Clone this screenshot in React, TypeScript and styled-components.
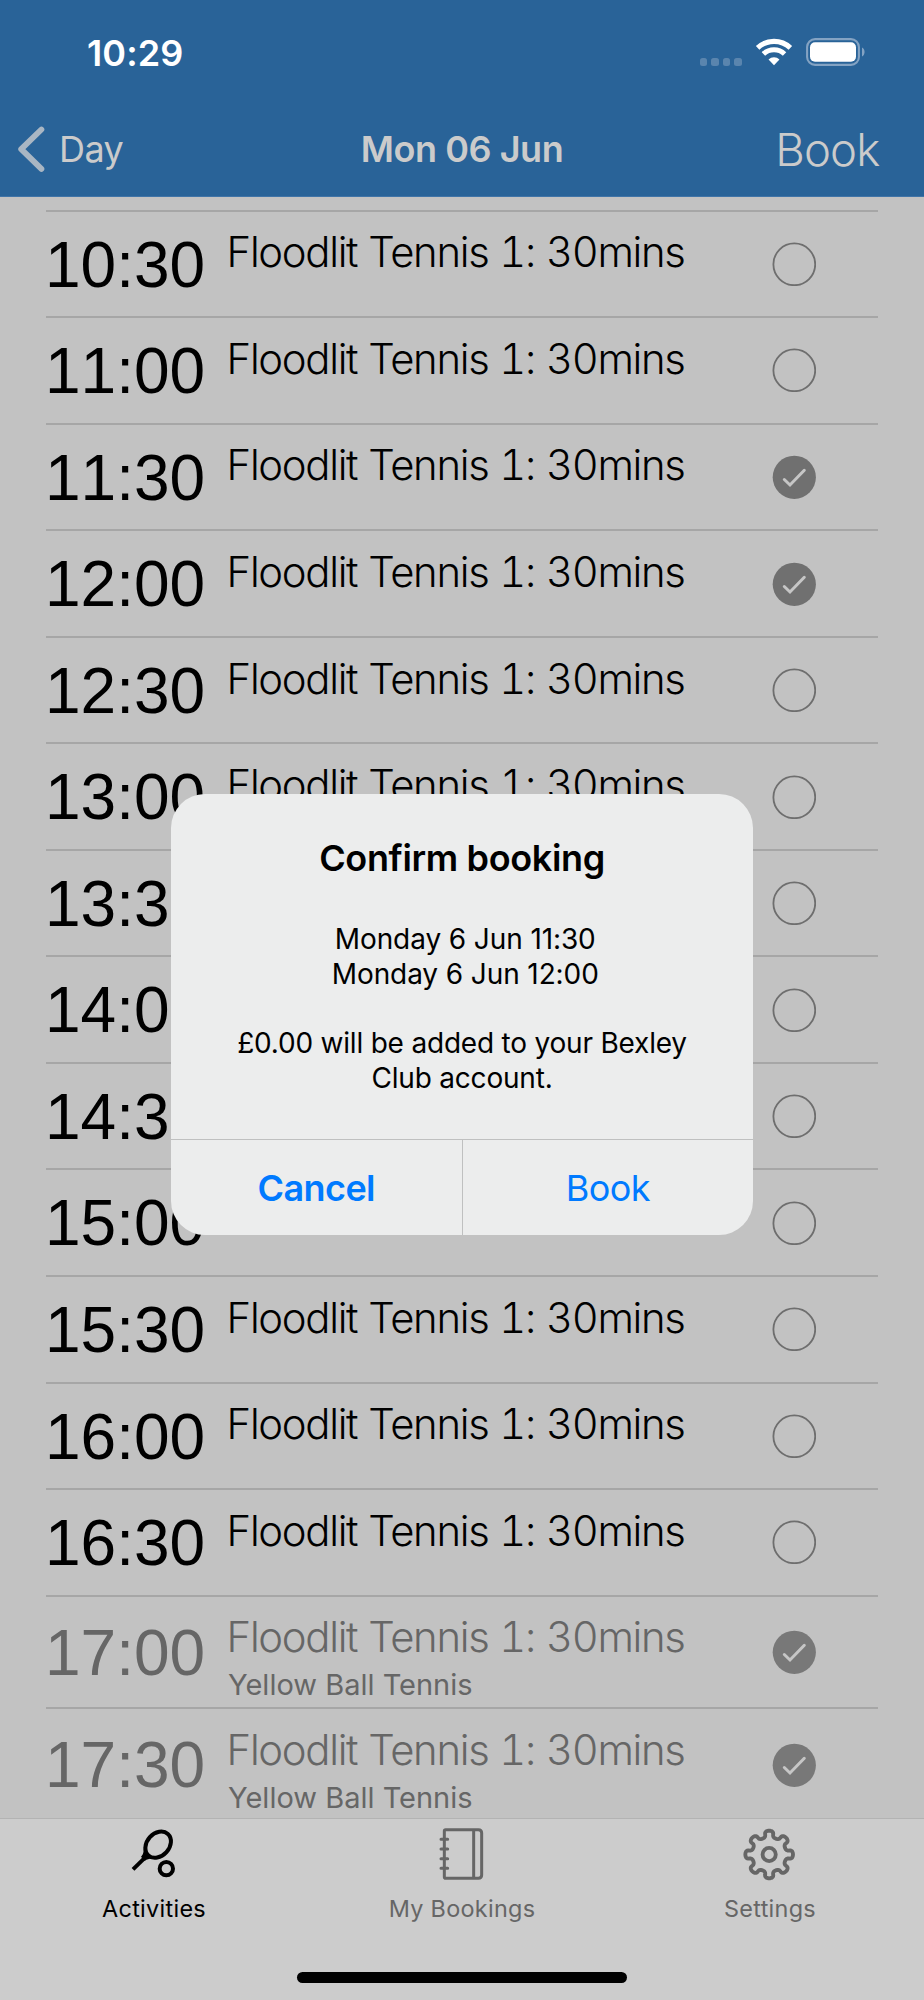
import React from 'react';
import styled, { createGlobalStyle } from 'styled-components';

const GlobalStyle = createGlobalStyle`
  *, *::before, *::after { box-sizing: border-box; }
  body { margin: 0; background: #c2c2c2; }
`;

const Screen = styled.div`
  position: relative;
  display: flex;
  flex-direction: column;
  width: 924px;
  height: 2000px;
  overflow: hidden;
  background: #c2c2c2;
  color: #000;
  font-family: Inter, 'Liberation Sans', sans-serif;
`;

const Header = styled.header`
  flex: none;
  height: 197px;
  background: #296398;
  border-bottom: 1px solid #3f74a8;
`;

const StatusBar = styled.div`
  display: flex;
  justify-content: space-between;
  align-items: center;
  height: 106px;
  padding: 0 59px 0 87px;
`;

const Clock = styled.span`
  color: #fff;
  font-size: 36px;
  font-weight: 600;
  letter-spacing: 0.1px;
  line-height: 106px;
`;

const StatusIcons = styled.div`
  display: flex;
  align-items: center;
  padding-bottom: 2px;
`;

const SignalDots = styled.div`
  display: flex;
  gap: 4px;
  margin: 20px 13px 0 0;
`;

const Dot = styled.i`
  width: 7.6px;
  height: 7.6px;
  border-radius: 2.5px;
  background: #5a85ae;
`;

const Wifi = styled.svg`
  width: 38px;
  height: 28px;
  margin-right: 13px;
`;

const Battery = styled.svg`
  width: 59px;
  height: 28px;
`;

const NavBar = styled.nav`
  display: grid;
  grid-template-columns: 1fr auto 1fr;
  align-items: center;
  height: 86px;
  padding: 0 17px;
  color: #cbcbcb;
`;

const BackButton = styled.div`
  display: flex;
  align-items: center;
  gap: 14px;
  font-size: 36px;
  letter-spacing: -0.6px;
  line-height: 44px;
`;

const Chevron = styled.svg`
  width: 28px;
  height: 46px;
`;

const NavTitle = styled.h1`
  margin: 0;
  font-size: 36px;
  font-weight: 600;
  letter-spacing: -0.44px;
  line-height: 44px;
`;

const NavAction = styled.div`
  justify-self: end;
  margin-right: 27.5px;
  padding-top: 1px;
  font-size: 45.5px;
  font-weight: 350;
  letter-spacing: -0.8px;
  line-height: 56px;
`;

const SlotList = styled.main`
  flex: 1;
  display: flex;
  flex-direction: column;
  min-height: 0;
  overflow: hidden;
  padding: 0 46px;
`;

const Slot = styled.section<{ $tall?: boolean; $muted?: boolean; $scrolled?: boolean }>`
  flex: none;
  display: flex;
  height: ${p => (p.$tall ? 112.7 : 106.54)}px;
  margin-top: ${p => (p.$scrolled ? -98 : 0)}px;
  border-bottom: 2px solid #a6a6a6;
  color: ${p => (p.$muted ? '#666' : '#000')};
`;

const SlotTime = styled.div`
  align-self: center;
  width: 184px;
  margin-left: -1px;
  padding-top: 1.5px;
  font: 400 64px/72px 'Liberation Sans', Arial, sans-serif;
  font-kerning: none;
`;

const SlotBody = styled.div`
  flex: 1;
  padding-top: 15.7px;
`;

const SlotTitle = styled.div`
  margin-left: -2.4px;
  font-size: 41.8px;
  font-weight: 300;
  font-variant-numeric: tabular-nums;
  letter-spacing: -1.3px;
  word-spacing: 1px;
  line-height: 50px;
  white-space: nowrap;
`;

const SlotNote = styled.div<{ $scrolled?: boolean }>`
  margin: ${p => (p.$scrolled ? 3 : 5)}px 0 0 -1px;
  font-size: 29px;
  line-height: 36px;
`;

const SlotMark = styled.svg`
  flex: none;
  align-self: center;
  width: 44px;
  height: 44px;
  margin-right: 62px;
`;

const TabBar = styled.footer`
  flex: none;
  display: flex;
  flex-direction: column;
  align-items: center;
  height: 182px;
  background: #ccc;
  border-top: 1px solid #b3b3b3;
`;

const Tabs = styled.div`
  display: grid;
  grid-template-columns: repeat(3, 1fr);
  width: 100%;
  height: 153px;
`;

const Tab = styled.div<{ $active?: boolean }>`
  display: flex;
  flex-direction: column;
  align-items: center;
  padding-top: 3px;
  color: ${p => (p.$active ? '#000' : '#666')};
  font-size: 23.4px;
  letter-spacing: 0.3px;
  line-height: 30px;
`;

const TabIcon = styled.svg`
  width: 70px;
  height: 60px;
  margin-bottom: 12px;
  fill: none;
  stroke: currentColor;
`;

const HomeIndicator = styled.div`
  width: 330px;
  height: 11px;
  border-radius: 6px;
  background: #000;
`;

const Dialog = styled.div`
  position: absolute;
  left: 171px;
  top: 794px;
  display: flex;
  flex-direction: column;
  width: 582px;
  height: 441px;
  border-radius: 34px;
  overflow: hidden;
  background: #eceded;
`;

const DialogContent = styled.div`
  flex: 1;
  padding-top: 41.6px;
  text-align: center;
`;

const DialogTitle = styled.h2`
  margin: 0 0 42.6px;
  font-size: 36px;
  font-weight: 600;
  letter-spacing: -0.36px;
  line-height: 44px;
`;

const DialogText = styled.p<{ $indent?: boolean }>`
  margin: 0 0 34.6px;
  padding-left: ${p => (p.$indent ? 6.5 : 0)}px;
  font-size: 28px;
  letter-spacing: ${p => (p.$indent ? -0.1 : -0.2)}px;
  line-height: 34.6px;
`;

const DialogActions = styled.div`
  display: flex;
  height: 96px;
  border-top: 1px solid #bfc0c0;
`;

const DialogButton = styled.div<{ $primary?: boolean }>`
  flex: 1;
  color: #007aff;
  font-size: 36px;
  font-weight: ${p => (p.$primary ? 600 : 400)};
  letter-spacing: -0.6px;
  line-height: 96px;
  text-align: center;

  & + & { border-left: 1px solid #bfc0c0; }
`;

type SlotData = { time: string; checked?: boolean; note?: string; scrolled?: boolean };

const slots: SlotData[] = [
  { time: '10:00', checked: true, note: 'Yellow Ball Tennis', scrolled: true },
  { time: '10:30' },
  { time: '11:00' },
  { time: '11:30', checked: true },
  { time: '12:00', checked: true },
  { time: '12:30' },
  { time: '13:00' },
  { time: '13:30' },
  { time: '14:00' },
  { time: '14:30' },
  { time: '15:00' },
  { time: '15:30' },
  { time: '16:00' },
  { time: '16:30' },
  { time: '17:00', checked: true, note: 'Yellow Ball Tennis' },
  { time: '17:30', checked: true, note: 'Yellow Ball Tennis' },
];

// Closed curve with eight rounded teeth around (cx, cy).
function gearPath(cx: number, cy: number): string {
  const steps = 240;
  const points: string[] = [];
  for (let i = 0; i < steps; i++) {
    const t = (i / steps) * Math.PI * 2;
    const angle = t + 0.055 * Math.sin(16 * t);
    const radius = 61.5 + 10 * Math.cos(8 * t);
    points.push(`${(cx + radius * Math.cos(angle)).toFixed(1)} ${(cy + radius * Math.sin(angle)).toFixed(1)}`);
  }
  return `M${points.join('L')}Z`;
}

function Mark({ checked, muted }: { checked?: boolean; muted?: boolean }) {
  return (
    <SlotMark viewBox="-22.3 -22.3 44 44" fill="none">
      {checked ? (
        <>
          <circle r="21.6" fill={muted ? '#787878' : '#707070'} />
          <path d="M-10 2.2L-4.3 7.7L10 -7" stroke="#c6c6c6" strokeWidth="3" strokeLinecap="round" />
        </>
      ) : (
        <circle r="20.9" stroke="#6e6e6e" strokeWidth="1.8" />
      )}
    </SlotMark>
  );
}

export default function App() {
  return (
    <Screen>
      <GlobalStyle />
      <Header>
        <StatusBar>
          <Clock>10:29</Clock>
          <StatusIcons>
            <SignalDots>
              <Dot /><Dot /><Dot /><Dot />
            </SignalDots>
            <Wifi viewBox="0 0 114 84" fill="none" stroke="#fff">
              <path d="M7.9 29.4A72 72 0 0 1 106.1 29.4" strokeWidth="15.5" />
              <path d="M25.3 48A46.5 46.5 0 0 1 88.7 48" strokeWidth="15" />
              <path d="M57 82L40.6 64.5A24 24 0 0 1 73.4 64.5Z" fill="#fff" stroke="none" />
            </Wifi>
            <Battery viewBox="0 0 59 28">
              <rect x="1.1" y="1.1" width="51.8" height="25.8" rx="8" fill="none" stroke="#84a3c3" strokeWidth="2.1" />
              <rect x="4" y="4.2" width="46" height="19.6" rx="5" fill="#fff" />
              <path d="M56 9.6C59.4 11 59.4 17 56 18.4Z" fill="#84a3c3" />
            </Battery>
          </StatusIcons>
        </StatusBar>
        <NavBar>
          <BackButton>
            <Chevron viewBox="0 0 28 46" fill="none">
              <path d="M24.4 3.5L4.2 23.2L24.4 42.9" stroke="#a9b6c3" strokeWidth="5.8" strokeLinecap="round" strokeLinejoin="round" />
            </Chevron>
            Day
          </BackButton>
          <NavTitle>Mon 06 Jun</NavTitle>
          <NavAction>Book</NavAction>
        </NavBar>
      </Header>

      <SlotList>
        {slots.map(slot => (
          <Slot key={slot.time} $tall={!!slot.note} $muted={!!slot.note} $scrolled={slot.scrolled}>
            <SlotTime>{slot.time}</SlotTime>
            <SlotBody>
              <SlotTitle>Floodlit Tennis 1: 30mins</SlotTitle>
              {slot.note && <SlotNote $scrolled={slot.scrolled}>{slot.note}</SlotNote>}
            </SlotBody>
            <Mark checked={slot.checked} muted={!!slot.note} />
          </Slot>
        ))}
      </SlotList>

      <TabBar>
        <Tabs>
          <Tab $active>
            <TabIcon viewBox="-3 21 210 180">
              <ellipse cx="114.5" cy="89" rx="43.5" ry="33.5" transform="rotate(-48 114.5 89)" strokeWidth="12" />
              <path d="M71 96C72 112 69 119 63 125L74 138C84 131 92 131 104 132L88 118Z" fill="currentColor" stroke="none" />
              <path d="M39 163L72 131" strokeWidth="12" />
              <circle cx="139" cy="161" r="20" strokeWidth="12" />
            </TabIcon>
            Activities
          </Tab>
          <Tab>
            <TabIcon viewBox="6 21 210 180" strokeWidth="9">
              <path d="M62 44H160Q170 44 170 54V180Q170 190 160 190H62Q58 190 58 186V48Q58 44 62 44Z" />
              <path d="M146 44V190" />
              <path d="M48 73H68M48 102H68M48 131H68M48 160H68" strokeLinecap="round" />
            </TabIcon>
            My Bookings
          </Tab>
          <Tab>
            <TabIcon viewBox="0 21 210 180" strokeWidth="11.5">
              <path d={gearPath(102.5, 118.5)} strokeLinejoin="round" />
              <circle cx="102.5" cy="118.5" r="19.8" />
            </TabIcon>
            Settings
          </Tab>
        </Tabs>
        <HomeIndicator />
      </TabBar>

      <Dialog role="dialog">
        <DialogContent>
          <DialogTitle>Confirm booking</DialogTitle>
          <DialogText $indent>
            Monday 6 Jun 11:30<br />
            Monday 6 Jun 12:00
          </DialogText>
          <DialogText>
            £0.00 will be added to your Bexley<br />
            Club account.
          </DialogText>
        </DialogContent>
        <DialogActions>
          <DialogButton $primary>Cancel</DialogButton>
          <DialogButton>Book</DialogButton>
        </DialogActions>
      </Dialog>
    </Screen>
  );
}
